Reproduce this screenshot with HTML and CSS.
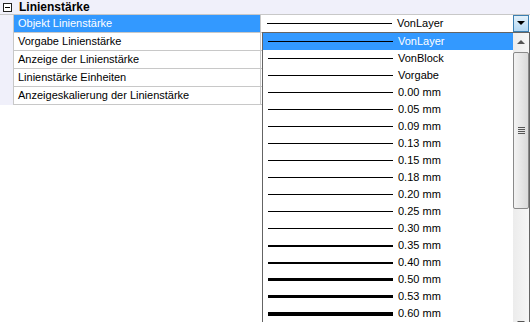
FILE: index.html
```html
<!DOCTYPE html>
<html lang="de">
<head>
  <meta charset="UTF-8">
  <title>Linienstärke</title>
  <link rel="stylesheet" href="styles.css">
</head>
<body>
  <div class="panel">
    <div class="group">
      <span class="toggle"></span>
      <span class="group-title">Linienstärke</span>
    </div>
    <div class="grid">
      <div class="row selected">
        <div class="name">Objekt Linienstärke</div>
        <div class="value combo">
          <span class="line w1"></span>
          <span class="label">VonLayer</span>
          <span class="combo-btn"></span>
        </div>
      </div>
      <div class="row">
        <div class="name">Vorgabe Linienstärke</div>
        <div class="value"></div>
      </div>
      <div class="row">
        <div class="name">Anzeige der Linienstärke</div>
        <div class="value"></div>
      </div>
      <div class="row">
        <div class="name">Linienstärke Einheiten</div>
        <div class="value"></div>
      </div>
      <div class="row">
        <div class="name">Anzeigeskalierung der Linienstärke</div>
        <div class="value"></div>
      </div>
    </div>

    <!-- aufgeklappte Liste -->
    <div class="dropdown">
      <ul class="items">
        <li class="active"><span class="line w1"></span><span class="label">VonLayer</span></li>
        <li><span class="line w1"></span><span class="label">VonBlock</span></li>
        <li><span class="line w1"></span><span class="label">Vorgabe</span></li>
        <li><span class="line w1"></span><span class="label">0.00 mm</span></li>
        <li><span class="line w1"></span><span class="label">0.05 mm</span></li>
        <li><span class="line w1"></span><span class="label">0.09 mm</span></li>
        <li><span class="line w1"></span><span class="label">0.13 mm</span></li>
        <li><span class="line w1"></span><span class="label">0.15 mm</span></li>
        <li><span class="line w1"></span><span class="label">0.18 mm</span></li>
        <li><span class="line w1"></span><span class="label">0.20 mm</span></li>
        <li><span class="line w1"></span><span class="label">0.25 mm</span></li>
        <li><span class="line w1"></span><span class="label">0.30 mm</span></li>
        <li><span class="line w2"></span><span class="label">0.35 mm</span></li>
        <li><span class="line w2"></span><span class="label">0.40 mm</span></li>
        <li><span class="line w3"></span><span class="label">0.50 mm</span></li>
        <li><span class="line w3"></span><span class="label">0.53 mm</span></li>
        <li><span class="line w4"></span><span class="label">0.60 mm</span></li>
      </ul>
      <div class="scrollbar">
        <div class="arrow up"></div>
        <div class="thumb"><span class="grip"></span></div>
        <div class="track"></div>
        <div class="arrow down"></div>
      </div>
    </div>
  </div>
</body>
</html>
```

FILE: styles.css
```css
body {
  margin: 0;
  font-family: Tahoma, "Liberation Sans", sans-serif;
  font-size: 11px;
  color: #000;
  background: #fff;
}
.panel {
  position: relative;
  width: 530px;
  height: 322px;
  overflow: hidden;
}
.group {
  display: flex;
  align-items: center;
  height: 14px;
  background: #f0f0fa;
}
.toggle {
  position: relative;
  width: 7px;
  height: 7px;
  margin: 0 7px 0 3px;
  border: 1px solid #222;
  background: #fff;
}
.toggle::after {
  content: "";
  position: absolute;
  left: 1px;
  top: 3px;
  width: 5px;
  height: 1px;
  background: #000;
}
.group-title {
  font-size: 12px;
  font-weight: bold;
  line-height: 14px;
}
.grid {
  padding-left: 13px;
  background: linear-gradient(#f0f0fa, #f0f0fa) left top / 13px 100% no-repeat;
  border-top: 1px solid #c8c8c8;
}
.row {
  display: flex;
  height: 17px;
  border-bottom: 1px solid #c8c8c8;
}
.name {
  width: 242px;
  padding-left: 4px;
  line-height: 17px;
  border-left: 1px solid #c8c8c8;
  border-right: 1px solid #c8c8c8;
  background: #fff;
  white-space: nowrap;
}
.row.selected .name {
  background: #3399ff;
  color: #fff;
}
.value {
  flex: 1;
  background: #fff;
}
.combo {
  display: flex;
  align-items: center;
  padding-left: 6px;
}
.line {
  display: inline-block;
  width: 125px;
  margin-right: 5px;
  background: #000;
}
.w1 { height: 1px; }
.w2 { height: 2px; }
.w3 { height: 3px; }
.w4 { height: 4px; }
.label {
  line-height: 17px;
}
.combo-btn {
  position: relative;
  width: 14px;
  height: 15px;
  margin-left: auto;
  margin-right: 1px;
  border: 1px solid #3c7fb1;
  background: linear-gradient(#e3f1fb, #b4d8f3);
}
.combo-btn::after {
  content: "";
  position: absolute;
  left: 3px;
  top: 5px;
  border-left: 4px solid transparent;
  border-right: 4px solid transparent;
  border-top: 4px solid #000;
}
.dropdown {
  position: absolute;
  left: 262px;
  top: 32px;
  width: 266px;
  height: 300px;
  display: flex;
  border: 1px solid #646464;
  background: #fff;
}
.items {
  flex: 1;
  margin: 0;
  padding: 0;
  list-style: none;
}
.items li {
  display: flex;
  align-items: center;
  height: 17px;
  padding-left: 5px;
}
.items li.active {
  background: #3399ff;
  color: #fff;
}
.scrollbar {
  width: 16px;
  display: flex;
  flex-direction: column;
  background: linear-gradient(90deg, #ececec, #f6f6f6);
}
.arrow {
  position: relative;
  height: 19px;
}
.arrow::after {
  content: "";
  position: absolute;
  left: 4px;
  border-left: 4px solid transparent;
  border-right: 4px solid transparent;
}
.arrow.up::after {
  top: 7px;
  border-bottom: 4px solid #555;
}
.arrow.down::after {
  top: 7px;
  border-top: 4px solid #555;
}
.thumb {
  display: flex;
  align-items: center;
  justify-content: center;
  height: 155px;
  border: 1px solid #8a8a8a;
  border-radius: 2px;
  background: linear-gradient(90deg, #f3f3f3, #dadada);
}
.grip {
  width: 7px;
  height: 7px;
  background: repeating-linear-gradient(#555 0 1px, transparent 1px 2px);
}
.track {
  flex: 1;
}
```
